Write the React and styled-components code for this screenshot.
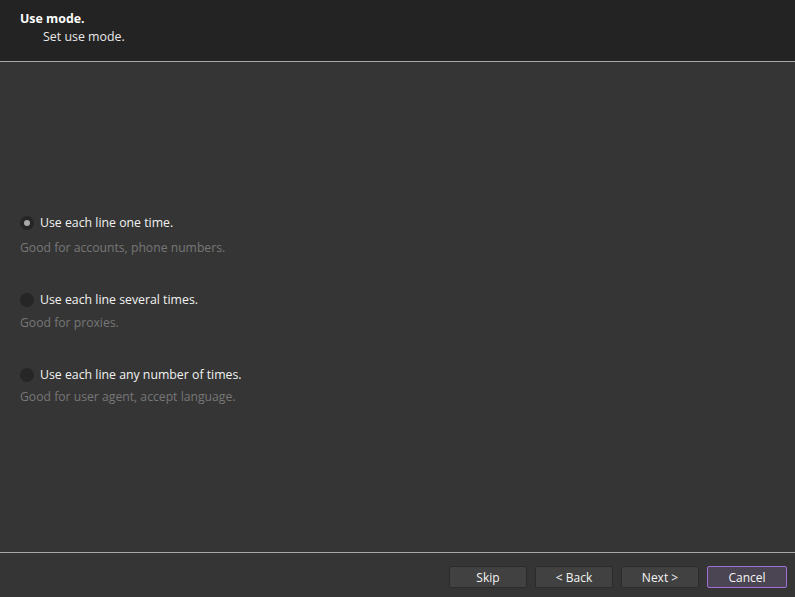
import React, { useState } from 'react';
import styled, { createGlobalStyle } from 'styled-components';

const GlobalStyle = createGlobalStyle`
  html, body {
    margin: 0;
    padding: 0;
    background: #353535;
  }
  body {
    font-family: "Open Sans", "Noto Sans", sans-serif;
    font-size: 12px;
  }
`;

const Wizard = styled.div`
  width: 795px;
  height: 597px;
  display: flex;
  flex-direction: column;
  background: #353535;
  color: #f0f0f0;
  overflow: hidden;
`;

const Header = styled.div`
  height: 62px;
  flex-shrink: 0;
  box-sizing: border-box;
  padding: 11px 0 0 20px;
  background: #232323;
  border-bottom: 1px solid #a8a8a8;
`;

const Title = styled.div`
  font-weight: 700;
  font-size: 12.4px;
  line-height: 16px;
  color: #ffffff;
`;

const Subtitle = styled.div`
  margin-top: 2px;
  padding-left: 23px;
  font-size: 12.4px;
  line-height: 16px;
  color: #e8e8e8;
`;

const Body = styled.div`
  flex: 1;
  display: flex;
  flex-direction: column;
  gap: 36px;
  padding: 153px 0 0 20px;
`;

const Option = styled.div`
  display: flex;
  flex-direction: column;
`;

const RadioRow = styled.label`
  display: flex;
  align-items: center;
  gap: 6px;
  height: 16px;
  line-height: 16px;
  font-size: 12.3px;
  color: #f2f2f2;
  cursor: pointer;
`;

const Radio = styled.span`
  width: 14px;
  height: 14px;
  border-radius: 50%;
  background: #262626;
  display: flex;
  align-items: center;
  justify-content: center;

  &::after {
    content: '';
    width: 6px;
    height: 6px;
    border-radius: 50%;
    background: ${(p) => (p.$checked ? '#a9a9a9' : 'transparent')};
  }
`;

const Description = styled.div`
  margin-top: ${(p) => p.$gap}px;
  line-height: 16px;
  font-size: 12.2px;
  color: #777777;
`;

const Footer = styled.div`
  height: 45px;
  flex-shrink: 0;
  box-sizing: border-box;
  border-top: 1px solid #a8a8a8;
  display: flex;
  justify-content: flex-end;
  align-items: flex-start;
  gap: 8px;
  padding: 13px 8px 0 0;
`;

const Button = styled.button`
  width: ${(p) => (p.$primary ? 80 : 78)}px;
  height: 22px;
  box-sizing: border-box;
  padding: 0;
  border-radius: 2px;
  border: 1px solid ${(p) => (p.$primary ? '#a070d8' : '#2b2b2b')};
  background: ${(p) => (p.$primary ? '#4b4452' : '#414141')};
  color: #f4f4f4;
  font-family: "Open Sans", "Noto Sans", sans-serif;
  font-size: 12px;
  cursor: pointer;
`;

const options = [
  { label: 'Use each line one time.', desc: 'Good for accounts, phone numbers.', gap: 9 },
  { label: 'Use each line several times.', desc: 'Good for proxies.', gap: 7 },
  { label: 'Use each line any number of times.', desc: 'Good for user agent, accept language.', gap: 6 },
];

export default function App() {
  const [mode, setMode] = useState(0);

  return (
    <Wizard>
      <GlobalStyle />
      <Header>
        <Title>Use mode.</Title>
        <Subtitle>Set use mode.</Subtitle>
      </Header>
      <Body>
        {options.map((o, i) => (
          <Option key={o.label}>
            <RadioRow onClick={() => setMode(i)}>
              <Radio $checked={mode === i} />
              {o.label}
            </RadioRow>
            <Description $gap={o.gap}>{o.desc}</Description>
          </Option>
        ))}
      </Body>
      <Footer>
        <Button>Skip</Button>
        <Button>&lt; Back</Button>
        <Button>Next &gt;</Button>
        <Button $primary>Cancel</Button>
      </Footer>
    </Wizard>
  );
}
